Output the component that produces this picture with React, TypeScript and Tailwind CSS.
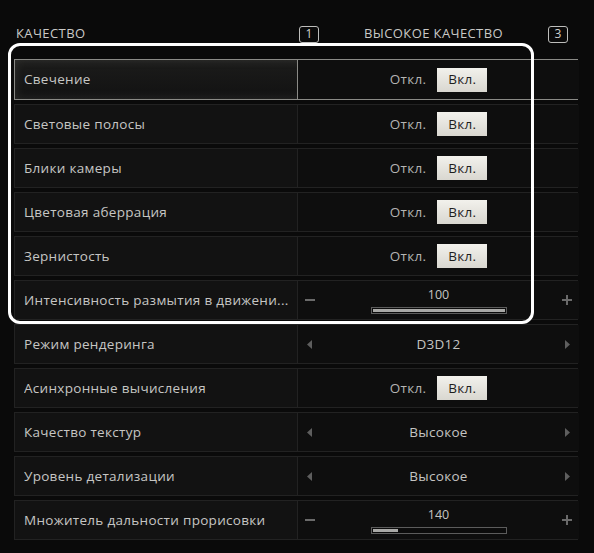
import React from "react";

type Row =
  | { label: string; kind: "toggle" }
  | { label: string; kind: "slider"; value: number; fill: number }
  | { label: string; kind: "select"; value: string };

const rows: Row[] = [
  { label: "Свечение", kind: "toggle" },
  { label: "Световые полосы", kind: "toggle" },
  { label: "Блики камеры", kind: "toggle" },
  { label: "Цветовая аберрация", kind: "toggle" },
  { label: "Зернистость", kind: "toggle" },
  { label: "Интенсивность размытия в движени...", kind: "slider", value: 100, fill: 100 },
  { label: "Режим рендеринга", kind: "select", value: "D3D12" },
  { label: "Асинхронные вычисления", kind: "toggle" },
  { label: "Качество текстур", kind: "select", value: "Высокое" },
  { label: "Уровень детализации", kind: "select", value: "Высокое" },
  { label: "Множитель дальности прорисовки", kind: "slider", value: 140, fill: 19 },
];

function Toggle() {
  return (
    <div className="flex items-center justify-center gap-[11px]">
      <span className="text-[13.5px] tracking-[0.3px] text-[#b4b4b2]">Откл.</span>
      <span className="flex h-[24px] w-[50px] items-center justify-center bg-gradient-to-b from-[#f2f1ec] to-[#d9d7d0] text-[13.5px] tracking-[0.3px] text-[#1e1e1e]">
        Вкл.
      </span>
    </div>
  );
}

function Slider({ value, fill }: { value: number; fill: number }) {
  return (
    <div className="flex h-full items-center justify-between px-[7px]">
      <span className="h-[2px] w-[10px] bg-[#6a6a6a]" />
      <div className="flex flex-col items-center pt-[1px]">
        <span className="text-[12.5px] leading-[16px] text-[#c4c4c2]">{value}</span>
        <div className="mt-[4px] h-[7px] w-[136px] border border-[#5c5c5c] bg-[#0c0c0c] p-[1px]">
          <div className="h-full bg-[#a9a9a7]" style={{ width: `${fill}%` }} />
        </div>
      </div>
      <span className="relative h-[10px] w-[10px]">
        <span className="absolute left-0 top-[4px] h-[2px] w-[10px] bg-[#6a6a6a]" />
        <span className="absolute left-[4px] top-0 h-[10px] w-[2px] bg-[#6a6a6a]" />
      </span>
    </div>
  );
}

function Select({ value }: { value: string }) {
  return (
    <div className="flex h-full items-center justify-between px-[9px]">
      <svg width="5" height="9" viewBox="0 0 5 9">
        <path d="M5 0 L0 4.5 L5 9 Z" fill="#5e5e5e" />
      </svg>
      <span className="text-[13.5px] tracking-[0.3px] text-[#c4c4c2]">{value}</span>
      <svg width="5" height="9" viewBox="0 0 5 9">
        <path d="M0 0 L5 4.5 L0 9 Z" fill="#5e5e5e" />
      </svg>
    </div>
  );
}

export default function App() {
  return (
    <div
      className="relative h-[553px] w-[594px] overflow-hidden bg-[#0a0a0a]"
      style={{ fontFamily: '"Open Sans", "Noto Sans", sans-serif' }}
    >
      {/* Header */}
      <div className="grid h-[59px] grid-cols-[282px_282px] pl-[14px] pt-[24px]">
        <div className="flex h-[20px] items-center pl-[2px] text-[13px] uppercase tracking-[0.4px] text-[#c9c9c7]">
          Качество
        </div>
        <div className="flex h-[20px] items-center justify-between pl-[3px] pr-[10px]">
          <span className="flex h-[17px] w-[20px] items-center justify-center rounded-[3px] border-[1.5px] border-[#bdbdbb] text-[12px] leading-none text-[#d0d0ce]">
            1
          </span>
          <span className="text-[13px] font-medium uppercase tracking-[0.4px] text-[#c9c9c7]">Высокое качество</span>
          <span className="flex h-[17px] w-[20px] items-center justify-center rounded-[3px] border-[1.5px] border-[#bdbdbb] text-[12px] leading-none text-[#d0d0ce]">
            3
          </span>
        </div>
      </div>

      {/* Rows */}
      <div className="flex flex-col gap-[4px] pl-[14px]">
        {rows.map((r, i) => {
          const active = i === 0;
          return (
            <div
              key={r.label}
              className={
                active
                  ? "grid h-[41px] w-[564px] grid-cols-[282px_282px] border border-[#8a8a86] bg-gradient-to-b from-[#1c1c1b] to-[#121212] shadow-[inset_0_0_10px_rgba(160,160,150,0.18)]"
                  : "grid h-[40px] w-[564px] grid-cols-[282px_282px] border border-[#222222] bg-[#121212]"
              }
            >
              <div className="flex items-center pl-[9px] text-[13.5px] tracking-[0.3px] text-[#c6c6c4]">
                <span className="truncate">{r.label}</span>
              </div>
              <div
                className={
                  active
                    ? "flex flex-col justify-center border-l border-[#8a8a86] bg-[#0e0e0e]"
                    : "flex flex-col justify-center border-l border-[#222222] bg-[#0e0e0e]"
                }
              >
                {r.kind === "toggle" && <Toggle />}
                {r.kind === "slider" && <Slider value={r.value} fill={r.fill} />}
                {r.kind === "select" && <Select value={r.value} />}
              </div>
            </div>
          );
        })}
      </div>

      {/* Focus outline overlay */}
      <div className="pointer-events-none absolute left-[8px] top-[43px] h-[281px] w-[526px] rounded-[12px] border-[3px] border-white" />
    </div>
  );
}
